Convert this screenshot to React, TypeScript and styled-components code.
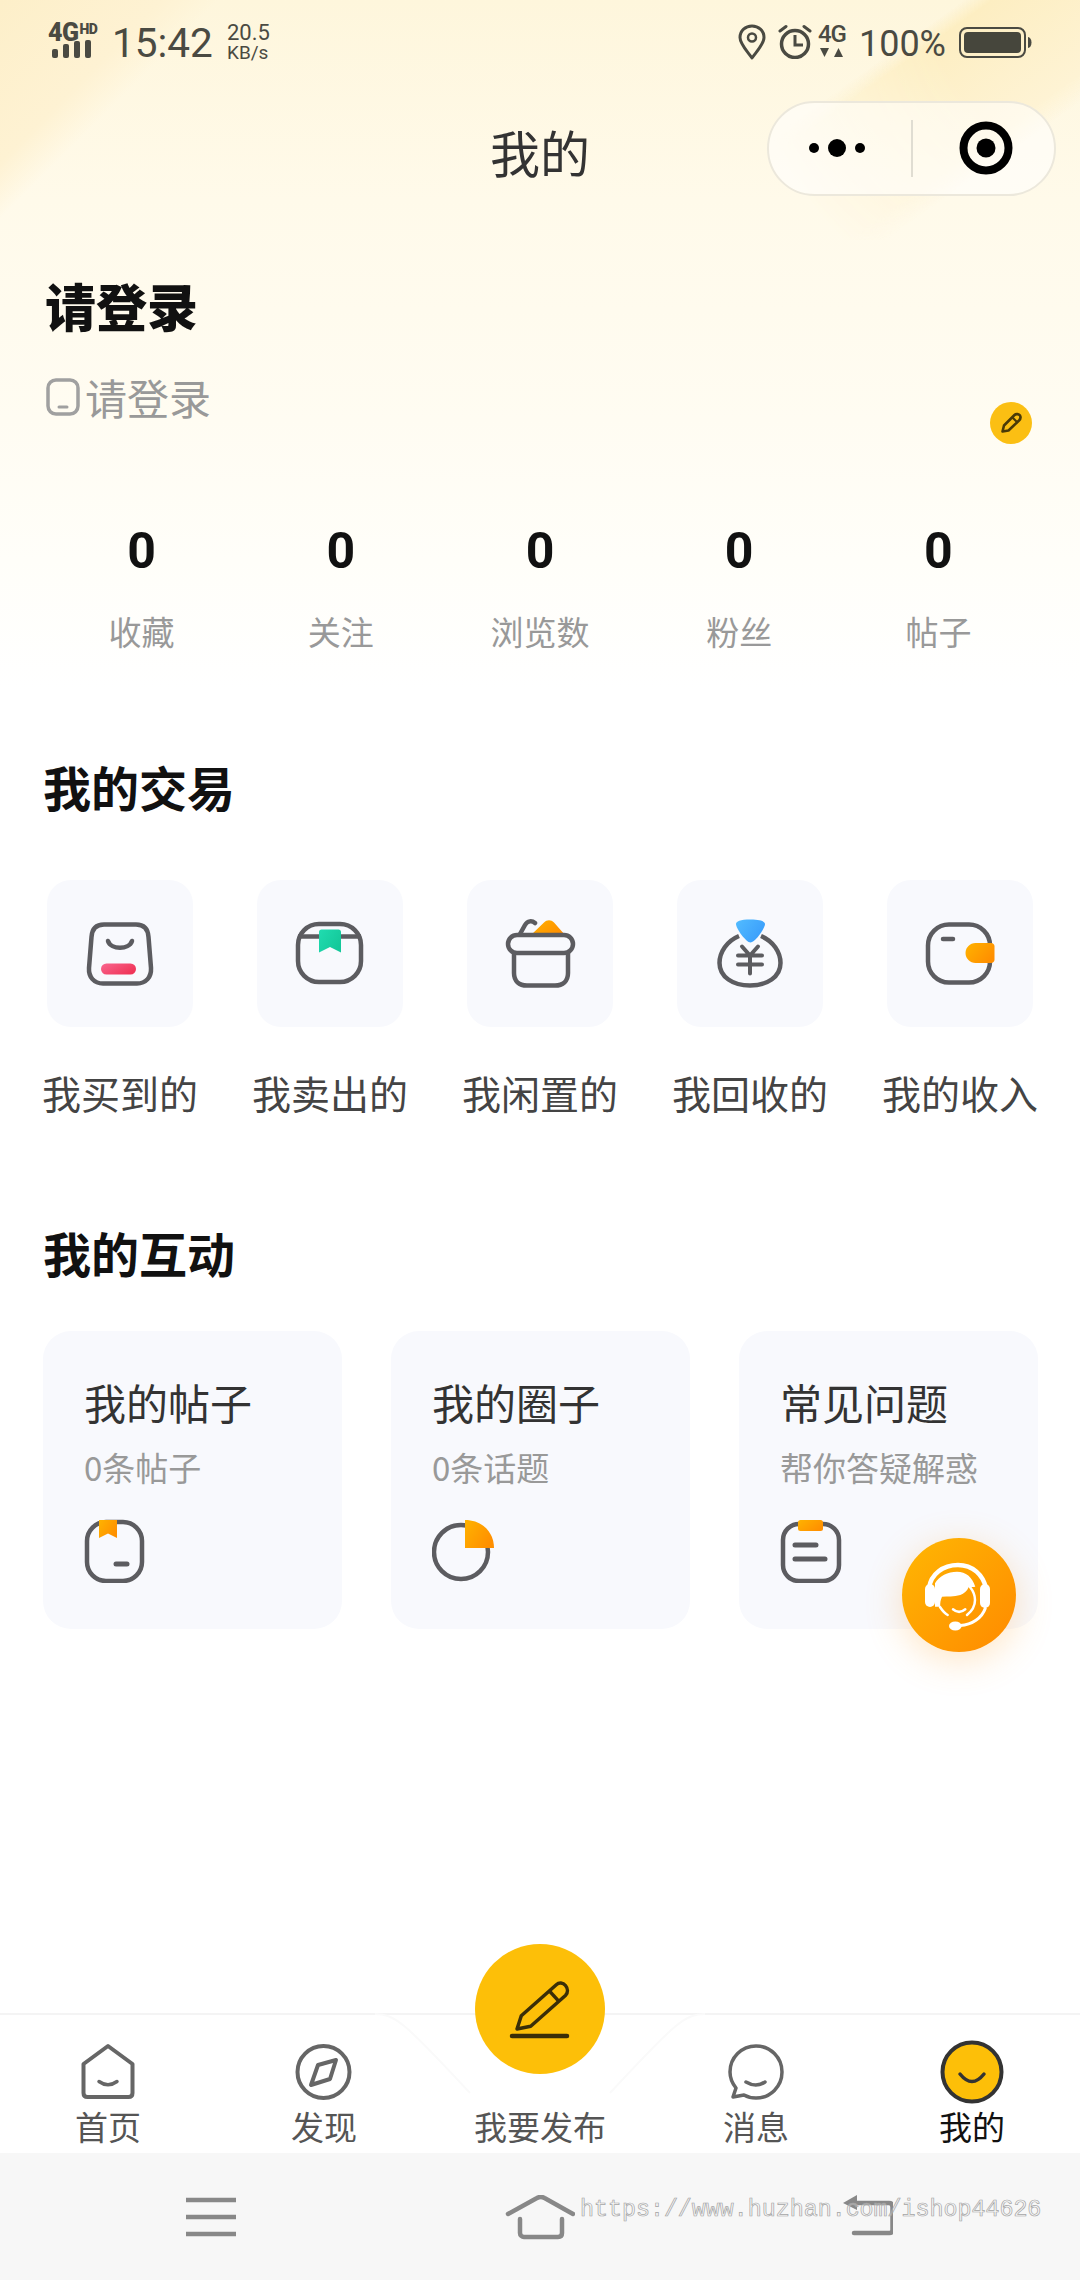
import styled, { createGlobalStyle } from 'styled-components';

const GlobalStyle = createGlobalStyle`
  html, body { margin: 0; padding: 0; background: #fff; }
  body { font-family: "Noto Sans CJK SC", "Noto Sans", sans-serif; }
  * { box-sizing: border-box; }
`;

const Page = styled.div`
  position: relative;
  width: 1080px;
  height: 2280px;
  display: flex;
  flex-direction: column;
  overflow: hidden;
  background: #fff;
`;

const HeaderGlow = styled.div`
  position: absolute;
  left: 0;
  top: 0;
  width: 1080px;
  height: 720px;
  background:
    linear-gradient(135deg, #fdefc9 0, #fef2d3 115px, rgba(254, 244, 214, 0) 155px),
    linear-gradient(to bottom, #fef6dc 0, #fffaea 200px, #fffcf2 420px, #fffef9 560px, #fff 690px);

  &::before {
    content: '';
    position: absolute;
    right: 0;
    top: 0;
    width: 360px;
    height: 240px;
    background: linear-gradient(144.5deg, rgba(253, 238, 194, 0) 142px, #fdeec2 158px, #fef3d4 270px, rgba(254, 243, 212, 0) 292px);
    mask-image: radial-gradient(circle at 100% 0, #000 35%, transparent 78%);
  }
`;

const Content = styled.div`
  position: relative;
  flex: 1;
  display: flex;
  flex-direction: column;
`;

const StatusBar = styled.div`
  height: 90px;
  padding: 24px 48px 0 48px;
  display: flex;
  justify-content: space-between;
  font-family: Roboto, "Liberation Sans", sans-serif;
  color: #4a4a42;
`;

const StatusSide = styled.div`
  display: flex;
  align-items: flex-start;
`;

const Network = styled.div`
  width: 52px;
  display: flex;
  flex-direction: column;
`;

const NetworkLabel = styled.div`
  display: flex;
  font-weight: 900;
  font-size: 25px;
  line-height: 17px;
  letter-spacing: -0.5px;
`;

const HdMark = styled.span`
  font-size: 14px;
  line-height: 10px;
  margin-left: 1px;
`;

const SignalBars = styled.div`
  display: flex;
  align-items: flex-end;
  gap: 5px;
  height: 19px;
  padding-left: 4px;
  margin-top: -2px;
`;

const SignalBar = styled.span<{ $h: number }>`
  width: 6px;
  height: ${p => p.$h}px;
  border-radius: 2px;
  background: #4a4a42;
`;

const Clock = styled.div`
  margin-left: 12px;
  font-size: 40.5px;
  line-height: 36px;
  margin-top: 1px;
  width: 115px;
`;

const Speed = styled.div`
  display: flex;
  flex-direction: column;
  font-size: 22px;
  line-height: 20px;
  margin-top: -1px;
`;

const SpeedUnit = styled.span`
  font-size: 19px;
`;

const StatusIcon = styled.svg<{ $ml?: number }>`
  display: block;
  margin-left: ${p => p.$ml ?? 0}px;
`;

const Mobile = styled.div`
  margin-left: 6px;
  width: 28px;
  display: flex;
  flex-direction: column;
  align-items: center;
  font-size: 24px;
  line-height: 20px;
  font-weight: 500;
  letter-spacing: -1px;
`;

const Battery = styled.div`
  margin-left: 13px;
  font-size: 36px;
  line-height: 36px;
  margin-top: 2px;
`;

const NavBar = styled.div`
  height: 116px;
  display: grid;
  grid-template-columns: 1fr auto 1fr;
  align-items: center;
  padding: 0 24px;
`;

const NavTitle = styled.div`
  grid-column: 2;
  font-size: 50px;
  line-height: 60px;
  padding-top: 6px;
  color: #333;
`;

const Capsule = styled.div`
  justify-self: end;
  width: 289px;
  height: 95px;
  border: 2px solid #ece8dc;
  border-radius: 48px;
  background: rgba(255, 255, 255, 0.55);
  display: flex;
  align-items: center;
`;

const CapsuleCell = styled.div<{ $shift: number }>`
  flex: 1;
  height: 57px;
  display: flex;
  align-items: center;
  justify-content: center;
  transform: translateX(${p => p.$shift}px);
`;

const CapsuleDivider = styled.div`
  width: 2px;
  height: 57px;
  background: #e0ddd2;
`;

const Profile = styled.section`
  padding: 69px 48px 0 45px;
`;

const Heading = styled.h2`
  margin: 0;
  font-size: 51px;
  line-height: 60px;
  font-weight: 900;
  color: #111;
`;

const ProfileRow = styled.div`
  margin-top: 40px;
  height: 66px;
  display: flex;
  justify-content: space-between;
  align-items: flex-start;
`;

const Phone = styled.div`
  display: flex;
  align-items: center;
  gap: 5px;
  padding-left: 1px;
  font-size: 42px;
  line-height: 44px;
  color: #999;
`;

const EditBadge = styled.div`
  width: 42px;
  height: 42px;
  margin-top: 27px;
  border-radius: 50%;
  background: #fbbf13;
  display: flex;
  align-items: center;
  justify-content: center;
`;

const Stats = styled.div`
  margin-top: 80px;
  padding: 0 42px;
  display: grid;
  grid-template-columns: repeat(5, 1fr);
`;

const Stat = styled.div`
  display: flex;
  flex-direction: column;
  align-items: center;
`;

const StatValue = styled.div`
  font-family: Roboto, "Liberation Sans", sans-serif;
  font-size: 50px;
  line-height: 60px;
  font-weight: 700;
  color: #111;
`;

const StatLabel = styled.div`
  margin-top: 28px;
  font-size: 33px;
  line-height: 44px;
  color: #999;
`;

const SectionTitle = styled.h3<{ $mt: number }>`
  margin: ${p => p.$mt}px 0 0 43px;
  font-size: 48px;
  line-height: 60px;
  font-weight: 700;
  color: #111;
`;

const Trades = styled.div`
  margin-top: 64px;
  padding-left: 43px;
  display: flex;
  gap: 56px;
`;

const Trade = styled.div`
  width: 154px;
  display: flex;
  flex-direction: column;
  align-items: center;
`;

const TradeTile = styled.div`
  width: 146px;
  height: 147px;
  border-radius: 24px;
  background: #f8f9fd;
  display: flex;
  align-items: center;
  justify-content: center;
`;

const TradeLabel = styled.div`
  margin-top: 43px;
  font-size: 39px;
  line-height: 44px;
  white-space: nowrap;
  color: #444;
`;

const Cards = styled.div`
  margin-top: 49px;
  padding-left: 43px;
  display: grid;
  grid-template-columns: repeat(3, 299px);
  gap: 49px;
`;

const Card = styled.div`
  height: 298px;
  padding: 46px 0 0 41px;
  border-radius: 28px;
  background: #f8f9fd;
`;

const CardTitle = styled.div`
  font-size: 42px;
  line-height: 50px;
  color: #333;
`;

const CardSub = styled.div`
  margin-top: 20px;
  margin-bottom: 32px;
  font-size: 33px;
  line-height: 40px;
  white-space: nowrap;
  color: #999;
`;

const ServiceFab = styled.div`
  position: absolute;
  left: 902px;
  top: 1538px;
  width: 114px;
  height: 114px;
  border-radius: 50%;
  background: linear-gradient(135deg, #ffb703 0%, #ff8a00 100%);
  box-shadow: 0 8px 36px rgba(255, 170, 60, 0.3);
`;

const TabBar = styled.nav`
  position: relative;
  height: 140px;
  padding-top: 25px;
  border-top: 2px solid #f4f4f4;
  background: #fff;
  display: grid;
  grid-template-columns: repeat(5, 216px);
`;

const TabNotch = styled.svg`
  position: absolute;
  left: 360px;
  top: -2px;
`;

const PublishButton = styled.div`
  position: absolute;
  left: 475px;
  top: -71px;
  width: 130px;
  height: 130px;
  border-radius: 50%;
  background: #fdbf08;
  display: flex;
  align-items: center;
  justify-content: center;
`;

const Tab = styled.div`
  position: relative;
  display: flex;
  flex-direction: column;
  align-items: center;
`;

const TabIconSlot = styled.div`
  height: 64px;
  display: flex;
  align-items: center;
  justify-content: center;
`;

const TabLabel = styled.div<{ $active?: boolean }>`
  margin-top: 2px;
  font-size: 33px;
  line-height: 40px;
  color: ${p => (p.$active ? '#111' : '#555')};
`;

const SystemBar = styled.div`
  position: relative;
  height: 127px;
  padding: 42px 0 0 186px;
  background: #f7f7f7;
  display: flex;
  align-items: flex-start;
  gap: 268px;
`;

const Watermark = styled.div`
  position: absolute;
  left: 580px;
  top: 44px;
  font-family: "Liberation Mono", monospace;
  font-size: 23.3px;
  line-height: 26px;
  white-space: nowrap;
  color: rgba(255, 255, 255, 0.3);
  -webkit-text-stroke: 0.7px #a4a4a4;
`;

const INK = '#5c5c60';
const TABINK = '#666';

const tradeItems = [
  { label: '我买到的', icon: <BagIcon /> },
  { label: '我卖出的', icon: <BoxIcon /> },
  { label: '我闲置的', icon: <BasketIcon /> },
  { label: '我回收的', icon: <MoneyIcon /> },
  { label: '我的收入', icon: <WalletIcon /> },
];

const stats = [
  ['0', '收藏'],
  ['0', '关注'],
  ['0', '浏览数'],
  ['0', '粉丝'],
  ['0', '帖子'],
];

function Gradient({ id, from, to }: { id: string; from: string; to: string }) {
  return (
    <linearGradient id={id} x1="0" y1="0" x2="1" y2="0.6">
      <stop offset="0" stopColor={from} />
      <stop offset="1" stopColor={to} />
    </linearGradient>
  );
}

function BagIcon() {
  return (
    <svg width="70" height="70" viewBox="0 0 70 70" fill="none">
      <defs><Gradient id="bagRed" from="#f9668f" to="#f03558" /></defs>
      <path d="M19 5.5H51C59 5.5 63 10 63.5 18L66 49C66.5 58 61 64.5 52 64.5H18C9 64.5 3.5 58 4 49L6.5 18C7 10 11 5.5 19 5.5Z" stroke={INK} strokeWidth="4.5" />
      <path d="M23 22C26 31 44 31 47 22" stroke={INK} strokeWidth="4.5" strokeLinecap="round" />
      <rect x="16" y="44.5" width="35" height="11" rx="5.5" fill="url(#bagRed)" />
    </svg>
  );
}

function BoxIcon() {
  return (
    <svg width="70" height="70" viewBox="0 0 70 70" fill="none">
      <defs><Gradient id="boxGreen" from="#20dcb0" to="#14c89a" /></defs>
      <rect x="3" y="5" width="63" height="58" rx="21" stroke={INK} strokeWidth="4.5" />
      <path d="M3 17.5H66" stroke={INK} strokeWidth="4.5" />
      <path d="M24 13C24 11.5 25 10.5 26.5 10.5H43.5C45 10.5 46 11.5 46 13V33.5L35 28L24 33.5Z" fill="url(#boxGreen)" />
    </svg>
  );
}

function BasketIcon() {
  return (
    <svg width="71" height="70" viewBox="0 0 71 70" fill="none">
      <defs><Gradient id="basketOrange" from="#ffb300" to="#ff8f00" /></defs>
      <path d="M15 15L20 6C22.5 1.5 27 1.5 30 4" stroke={INK} strokeWidth="4.5" strokeLinecap="round" />
      <path d="M26 16L39 3.5C42 0.5 46 0.5 49 3.5L60 16Z" fill="url(#basketOrange)" />
      <rect x="3" y="16" width="65" height="18" rx="9" stroke={INK} strokeWidth="4.5" />
      <path d="M9 34V54C9 62 14 66.5 22 66.5H50C58 66.5 63 62 63 54V34" stroke={INK} strokeWidth="4.5" />
    </svg>
  );
}

function MoneyIcon() {
  return (
    <svg width="70" height="70" viewBox="0 0 70 70" fill="none">
      <defs><Gradient id="moneyBlue" from="#52bcff" to="#3a9dfb" /></defs>
      <path d="M24 17C12 22 4.5 33 4.5 44C4.5 58 18 66.5 35 66.5C52 66.5 65.5 58 65.5 44C65.5 33 58 22 46 17" stroke={INK} strokeWidth="4.5" />
      <path d="M21 5C21 2.5 25 0.5 35.5 0.5C46 0.5 50 2.5 50 5C50 9.5 40 23.5 35.5 23.5C31 23.5 21 9.5 21 5Z" fill="url(#moneyBlue)" />
      <path d="M27 27.5L35 36.5L43 27.5M23 36.5H47M23 45.5H47M35 36.5V54.5" stroke={INK} strokeWidth="4" strokeLinecap="round" />
    </svg>
  );
}

function WalletIcon() {
  return (
    <svg width="71" height="70" viewBox="0 0 71 70" fill="none">
      <defs><Gradient id="walletOrange" from="#ffb300" to="#ff8f00" /></defs>
      <rect x="3" y="5.5" width="62" height="58" rx="21" stroke={INK} strokeWidth="4.5" />
      <path d="M18 20H28" stroke={INK} strokeWidth="4.5" strokeLinecap="round" />
      <path d="M50.5 24H66C68 24 69.5 25.5 69.5 27.5V40.5C69.5 42.5 68 44 66 44H50.5C45 44 40.5 39.5 40.5 34C40.5 28.5 45 24 50.5 24Z" fill="url(#walletOrange)" />
    </svg>
  );
}

function PostIcon() {
  return (
    <svg width="62" height="64" viewBox="0 0 62 64" fill="none">
      <defs><Gradient id="postOrange" from="#ffb300" to="#ff9000" /></defs>
      <rect x="3" y="3" width="55" height="59" rx="19" stroke={INK} strokeWidth="4.5" />
      <path d="M32 45H43" stroke={INK} strokeWidth="5" strokeLinecap="round" />
      <path d="M15 1H33V19L24 14.5L15 19Z" fill="url(#postOrange)" />
    </svg>
  );
}

function CircleIcon() {
  return (
    <svg width="64" height="64" viewBox="0 0 64 64" fill="none">
      <defs><Gradient id="circleOrange" from="#ffb300" to="#ff8f00" /></defs>
      <circle cx="29" cy="33" r="27" stroke={INK} strokeWidth="4.5" />
      <path d="M33 1C50 1 62 13 62 29H33Z" fill="url(#circleOrange)" />
    </svg>
  );
}

function FaqIcon() {
  return (
    <svg width="62" height="64" viewBox="0 0 62 64" fill="none">
      <defs><Gradient id="faqOrange" from="#ffb300" to="#ff9000" /></defs>
      <rect x="3" y="5" width="56" height="57" rx="16" stroke={INK} strokeWidth="4.5" />
      <path d="M15 26H36M15 40H45" stroke={INK} strokeWidth="5" strokeLinecap="round" />
      <rect x="18" y="1" width="25" height="11" rx="2.5" fill="url(#faqOrange)" />
    </svg>
  );
}

function ServiceIcon() {
  return (
    <svg width="114" height="114" viewBox="0 0 114 114" fill="none">
      <path d="M27 50C29 36 41 27 56 27C71 27 81 37 84 50" stroke="#fff" strokeWidth="4.5" strokeLinecap="round" />
      <rect x="23" y="46" width="10" height="23" rx="5" fill="#fff" />
      <rect x="78" y="46" width="10" height="24" rx="5" fill="#fff" />
      <path d="M33 68.7V45.3C37 38 46 33.7 55 33.7C64 33.7 70 39 73.3 48.7C71 49 68 49 66.6 49.3C65 53 62 56 58.3 57C52 58.8 45 58.5 40 58.7C38.5 62 38 65 38.3 68.7Z" fill="#fff" />
      <path d="M68 49C72 54 73 58 73 62C73 68 70 73 65 77M38 69C40 72 42 75 45.7 77" stroke="#fff" strokeWidth="2.5" strokeLinecap="round" />
      <path d="M51 71.3Q57 76.5 63.3 71.3" stroke="#fff" strokeWidth="2.5" strokeLinecap="round" />
      <path d="M83.3 70.3C80 80 70 87 58.3 87.5" stroke="#fff" strokeWidth="3" strokeLinecap="round" />
      <ellipse cx="53.3" cy="88" rx="6.3" ry="4.5" fill="#fff" />
    </svg>
  );
}

function TabHome() {
  return (
    <svg width="56" height="58" viewBox="0 0 56 58" fill="none">
      <path d="M28 3L3.5 21V50C3.5 52.5 5 54 7.5 54H48.5C51 54 52.5 52.5 52.5 50V21Z" stroke={TABINK} strokeWidth="4" strokeLinejoin="round" />
      <path d="M19 38.5Q28 45 37 38.5" stroke={TABINK} strokeWidth="3.5" strokeLinecap="round" />
    </svg>
  );
}

function TabCompass() {
  return (
    <svg width="60" height="60" viewBox="0 0 60 60" fill="none">
      <circle cx="29.5" cy="30" r="26" stroke={TABINK} strokeWidth="4" />
      <path d="M42 18L24 23L17 43L36 37Z" stroke={TABINK} strokeWidth="4" strokeLinejoin="round" />
    </svg>
  );
}

function TabChat() {
  return (
    <svg width="60" height="60" viewBox="0 0 60 60" fill="none">
      <path d="M30 4C44.4 4 56 15.6 56 30C56 44.4 44.4 56 30 56C25.5 56 21.5 55 18 53L7 55L10 46C6 41 4 36 4 30C4 15.6 15.6 4 30 4Z" stroke={TABINK} strokeWidth="3.5" strokeLinejoin="round" />
      <path d="M20 40Q30 46 39 40" stroke={TABINK} strokeWidth="3.5" strokeLinecap="round" />
    </svg>
  );
}

function TabMine() {
  return (
    <svg width="64" height="64" viewBox="0 0 64 64" fill="none">
      <circle cx="32" cy="32" r="29.5" fill="#fdbf08" stroke="#333" strokeWidth="4" />
      <path d="M20 34Q32 49 44 34" stroke="#333" strokeWidth="3.5" strokeLinecap="round" />
    </svg>
  );
}

export default function App() {
  return (
    <Page>
      <GlobalStyle />
      <HeaderGlow />
      <Content>
        <StatusBar>
          <StatusSide>
            <Network>
              <NetworkLabel>4G<HdMark>HD</HdMark></NetworkLabel>
              <SignalBars>
                <SignalBar $h={9} />
                <SignalBar $h={14} />
                <SignalBar $h={17} />
                <SignalBar $h={18} />
              </SignalBars>
            </Network>
            <Clock>15:42</Clock>
            <Speed>
              20.5
              <SpeedUnit>KB/s</SpeedUnit>
            </Speed>
          </StatusSide>
          <StatusSide>
            <StatusIcon width="28" height="36" viewBox="0 0 28 36" fill="none" $ml={0}>
              <path d="M14 34C9 27 2 20 2 13.5C2 6.5 7.5 2 14 2C20.5 2 26 6.5 26 13.5C26 20 19 27 14 34Z" stroke="#4a4a42" strokeWidth="3" strokeLinejoin="round" />
              <circle cx="14" cy="13.5" r="4" stroke="#4a4a42" strokeWidth="2.5" />
            </StatusIcon>
            <StatusIcon width="34" height="35" viewBox="0 0 34 35" fill="none" $ml={12}>
              <circle cx="17" cy="20" r="13.5" stroke="#4a4a42" strokeWidth="3.5" />
              <path d="M17 11V21H25" stroke="#4a4a42" strokeWidth="3" />
              <path d="M2 7L8 2.5M32 7L26 2.5" stroke="#4a4a42" strokeWidth="3" strokeLinecap="round" />
            </StatusIcon>
            <Mobile>
              4G
              <svg width="26" height="11" viewBox="0 0 26 11" fill="#4a4a42" style={{ marginTop: 3 }}>
                <path d="M1 1H10L5.5 10Z" />
                <path d="M16.5 1L21 10H12Z" transform="translate(3 0)" />
              </svg>
            </Mobile>
            <Battery>100%</Battery>
            <StatusIcon width="73" height="31" viewBox="0 0 73 31" fill="none" $ml={13} style={{ marginTop: 3 }}>
              <rect x="1" y="1" width="65" height="29" rx="7" stroke="#4a4a42" strokeWidth="2" />
              <rect x="5" y="5" width="57" height="21" rx="4" fill="#46463c" />
              <path d="M69 10C71 10.5 72.5 12 72.5 15.5C72.5 19 71 20.5 69 21Z" fill="#4a4a42" />
            </StatusIcon>
          </StatusSide>
        </StatusBar>

        <NavBar>
          <NavTitle>我的</NavTitle>
          <Capsule>
            <CapsuleCell $shift={-3}>
              <svg width="60" height="20" viewBox="0 0 60 20" fill="#000">
                <circle cx="7" cy="10" r="5" />
                <circle cx="30" cy="10" r="9" />
                <circle cx="53" cy="10" r="5" />
              </svg>
            </CapsuleCell>
            <CapsuleDivider />
            <CapsuleCell $shift={3}>
              <svg width="54" height="54" viewBox="0 0 54 54" fill="none">
                <circle cx="27" cy="27" r="22.5" stroke="#000" strokeWidth="8" />
                <circle cx="27" cy="27" r="9.5" fill="#000" />
              </svg>
            </CapsuleCell>
          </Capsule>
        </NavBar>

        <Profile>
          <Heading>请登录</Heading>
          <ProfileRow>
            <Phone>
              <svg width="34" height="38" viewBox="0 0 34 38" fill="none">
                <rect x="2" y="2" width="30" height="34" rx="8" stroke="#a0a0a0" strokeWidth="3.5" />
                <path d="M13 29H21" stroke="#a0a0a0" strokeWidth="3" strokeLinecap="round" />
              </svg>
              请登录
            </Phone>
            <EditBadge>
              <svg width="24" height="24" viewBox="0 0 24 24" fill="none">
                <path d="M3.5 20.5L5 14.5L15.5 4C17 2.5 20 3 21 4.5C21.8 6 21.5 8 20 9.5L9.5 19.5Z" stroke="#4a3a08" strokeWidth="2.6" strokeLinejoin="round" />
                <path d="M13.5 6.5L18 11" stroke="#4a3a08" strokeWidth="2.2" />
              </svg>
            </EditBadge>
          </ProfileRow>
        </Profile>

        <Stats>
          {stats.map(([value, label]) => (
            <Stat key={label}>
              <StatValue>{value}</StatValue>
              <StatLabel>{label}</StatLabel>
            </Stat>
          ))}
        </Stats>

        <SectionTitle $mt={103}>我的交易</SectionTitle>
        <Trades>
          {tradeItems.map(item => (
            <Trade key={item.label}>
              <TradeTile>{item.icon}</TradeTile>
              <TradeLabel>{item.label}</TradeLabel>
            </Trade>
          ))}
        </Trades>

        <SectionTitle $mt={108}>我的互动</SectionTitle>
        <Cards>
          <Card>
            <CardTitle>我的帖子</CardTitle>
            <CardSub>0条帖子</CardSub>
            <PostIcon />
          </Card>
          <Card>
            <CardTitle>我的圈子</CardTitle>
            <CardSub>0条话题</CardSub>
            <CircleIcon />
          </Card>
          <Card>
            <CardTitle>常见问题</CardTitle>
            <CardSub>帮你答疑解惑</CardSub>
            <FaqIcon />
          </Card>
        </Cards>

        <ServiceFab>
          <ServiceIcon />
        </ServiceFab>
      </Content>

      <TabBar>
        <TabNotch width="360" height="100" viewBox="0 0 360 100" fill="none">
          <path d="M15 1C35 1 45 10 110 80M345 1C325 1 315 10 250 80" stroke="#fafafa" strokeWidth="2" />
        </TabNotch>
        <Tab>
          <TabIconSlot><TabHome /></TabIconSlot>
          <TabLabel>首页</TabLabel>
        </Tab>
        <Tab>
          <TabIconSlot><TabCompass /></TabIconSlot>
          <TabLabel>发现</TabLabel>
        </Tab>
        <Tab>
          <TabIconSlot />
          <TabLabel>我要发布</TabLabel>
        </Tab>
        <Tab>
          <TabIconSlot><TabChat /></TabIconSlot>
          <TabLabel>消息</TabLabel>
        </Tab>
        <Tab>
          <TabIconSlot><TabMine /></TabIconSlot>
          <TabLabel $active>我的</TabLabel>
        </Tab>
        <PublishButton>
          <svg width="64" height="64" viewBox="0 0 64 64" fill="none">
            <path d="M9 52L13.3 38.8L48.3 7.8C51 5.3 55 5.5 57.5 8.5C60 11.5 60 15.5 57.7 18.2L22.7 49.2Z" stroke="#3a2e08" strokeWidth="3.5" strokeLinejoin="round" />
            <path d="M41.3 13.8L50.7 24.2" stroke="#3a2e08" strokeWidth="3.5" />
            <path d="M4 59H59" stroke="#3a2e08" strokeWidth="4.5" strokeLinecap="round" />
          </svg>
        </PublishButton>
      </TabBar>

      <SystemBar>
        <svg width="50" height="44" viewBox="0 0 50 44" fill="none" stroke="#888" strokeWidth="4.5">
          <path d="M0 5H50M0 22H50M0 39H50" />
        </svg>
        <svg width="71" height="50" viewBox="0 0 71 50" fill="none" stroke="#888" strokeWidth="4.5" strokeLinecap="round" strokeLinejoin="round">
          <path d="M4 19L33 3C35.5 1.5 38 1.5 40.5 3L69 19" />
          <path d="M16 24V38C16 40.5 18 42 20 42H54C56.5 42 58 40.5 58 38V24" />
        </svg>
        <svg width="50" height="44" viewBox="0 0 50 44" fill="none">
          <path d="M14 8H46C48.5 8 49.5 9.5 49.5 12V35C49.5 37 48.5 38 46.5 38H11" stroke="#888" strokeWidth="4.5" strokeLinecap="round" strokeLinejoin="round" />
          <path d="M0 8L14 0V15Z" fill="#888" />
        </svg>
        <Watermark>https://www.huzhan.com/ishop44626</Watermark>
      </SystemBar>
    </Page>
  );
}
